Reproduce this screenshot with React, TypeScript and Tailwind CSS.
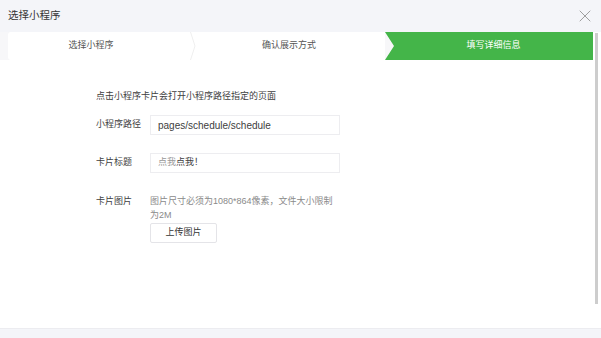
import { X } from "lucide-react"

const font = "font-['Liberation_Sans','Noto_Sans_CJK_SC',sans-serif]"

export default function App() {
  return (
    <div className={`w-[601px] h-[338px] bg-white flex flex-col overflow-hidden ${font}`}>
      <div className="h-[32px] bg-[#f4f5f9] flex items-center justify-between pl-[8px] pr-[6px]">
        <span className="text-[10.5px] text-[#353535]">选择小程序</span>
        <X size={20} strokeWidth={1} className="text-[#8d8d8d]" />
      </div>
      <div className="flex flex-1 min-h-0">
        <div className="flex-1 flex flex-col">
          <Steps />
          <Form />
        </div>
        <div className="w-[8px] pt-[1px] pb-[24px] flex justify-start pl-[2px]">
          <div className="w-[3px] h-full bg-[#cdcdcd]" />
        </div>
      </div>
      <div className="h-[10px] bg-[#f4f5f9] border-t border-[#ececf0]" />
    </div>
  )
}

function Steps() {
  return (
    <div className="flex h-[28px] bg-[#f7f7f9] pl-[8px] text-[9px]">
      <div className="w-[185px] bg-white flex items-center justify-center pr-[19px] text-[#555] rounded-l-[3px]">
        选择小程序
      </div>
      <div className="relative w-[192px] bg-white flex items-center justify-center text-[#555]">
        <svg width="6" height="28" viewBox="0 0 6 28" className="absolute left-[-3px] top-0">
          <path d="M0.5 0 L5 14 L0.5 28" fill="none" stroke="#efefef" strokeWidth="1" />
        </svg>
        确认展示方式
      </div>
      <div className="flex-1 bg-[#44b549] text-white flex items-center justify-center pl-[9px] [clip-path:polygon(0_0,100%_0,100%_100%,0_100%,9px_50%)]">
        填写详细信息
      </div>
    </div>
  )
}

function Form() {
  return (
    <div className="pl-[96px] pt-[29px] text-[9px] text-[#404040]">
      <p className="leading-[14px]">点击小程序卡片会打开小程序路径指定的页面</p>
      <div className="flex items-center mt-[12px]">
        <span className="w-[54px]">小程序路径</span>
        <div className="w-[190px] h-[20px] border border-[#ededf0] flex items-center pl-[7px] text-[10px] text-[#404040]">
          pages/schedule/schedule
        </div>
      </div>
      <div className="flex items-center mt-[18px]">
        <span className="w-[54px]">卡片标题</span>
        <div className="w-[190px] h-[20px] border border-[#ededf0] flex items-center pl-[7px] text-[9px]">
          <span className="text-[#999]">点我</span>
          <span>点我！</span>
        </div>
      </div>
      <div className="flex items-start mt-[21px]">
        <span className="w-[54px] leading-[14px]">卡片图片</span>
        <div className="w-[190px]">
          <p className="leading-[14px] text-[#8a8a8a]">图片尺寸必须为1080*864像素，文件大小限制为2M</p>
          <button className="mt-[1px] w-[67px] h-[20px] border border-[#e4e4e8] bg-white text-[9px] text-[#353535] rounded-[2px]">
            上传图片
          </button>
        </div>
      </div>
    </div>
  )
}
